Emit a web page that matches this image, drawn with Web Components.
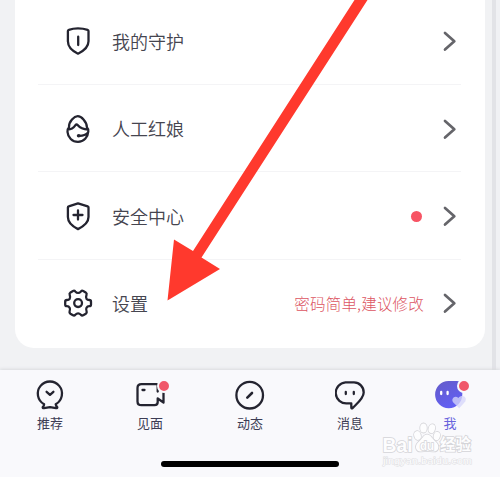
<!DOCTYPE html>
<html lang="zh-CN">
<head>
<meta charset="utf-8">
<title>我的</title>
<style>
html,body{margin:0;width:500px;height:477px;overflow:hidden;background:#f1f2f4;font-family:"Noto Sans CJK SC",sans-serif}
</style>
</head>
<body>
<profile-screen></profile-screen>
<script>
const icons = {
  shield: ['64 27 28 30', '<path d="M78 29.300c4 0 7 .6 9.600 1.500q.9.3.9 1.300v10.200c0 5.200-4 9.300-10.500 12.400c-6.500-3.100-10.100-7.200-10.100-12.400V32.100q0-1 .900-1.300c2.500-.900 5.200-1.500 9.200-1.500zM78.200 37.700v8.300"/>'],
  agent: ['64 114.500 28 30', '<path d="M69 127.800C68.800 124.500 70.200 121.900 72 119.900C73.800 117.900 75.700 116.700 77.700 116.700C79.700 116.700 81.800 118 83.500 120C85.300 122.100 87 124.600 86.900 127.800C88.100 129 88.500 130.700 88.300 132C88 137.500 83.800 142.400 78 142.400C72.200 142.400 67.900 138 67.500 132.500C67.300 130.500 67.800 129 69 127.800M67.700 130C71.300 130 73.500 128.500 75.500 125.600Q76.500 124.400 77.600 125.600C79.800 128.300 83.500 130 88.100 130.200M87.500 133.500C85.800 135.400 83.200 136.200 79.500 136.300"/><ellipse cx="78.700" cy="136.300" rx="1.900" ry="1.700" fill="#242430" stroke="none"/>'],
  safety: ['64 201.500 28 30', '<path d="M78 203.800l9.700 3q.8.200.8 1.200v9.600c0 5-4 8.900-10.500 12c-6.500-3.100-10.100-7-10.100-12V208q0-1 .8-1.200zM78 211v9M73.500 215.500h9"/>'],
  gear: ['63 288.500 30 30', '<path d="M75.300 291.900Q78.100 295 80.900 291.900Q81.900 290.700 83.200 291.400L85.700 292.900Q87.100 293.800 86.500 295.300C85.200 299 86.900 300.500 89.300 300.500Q91 300.500 91 302.200V305Q91 306.700 89.300 306.700C86.700 306.700 85.400 309 86.600 311.900Q87.100 313.300 85.800 314.200L83.200 315.800Q81.900 316.500 80.900 315.200Q78.100 312.400 75.300 315.200Q74.300 316.500 73 315.800L70.400 314.200Q69.100 313.300 69.600 311.900C70.800 309 69.400 306.700 66.900 306.700Q65.200 306.700 65.200 305V302.200Q65.200 300.500 66.900 300.500C69.300 300.500 71 299 69.700 295.300Q69.100 293.800 70.500 292.900L73 291.400Q74.300 290.700 75.300 291.900z"/><circle cx="78.100" cy="303.600" r="3.900"/>'],
  recommend: ['35 378 30 34', '<path d="M44.100 404.200A12.100 12.100 0 1 1 55.700 404.200C56 405.700 56.800 406.700 57.300 407.200Q57.300 408.300 56 408.200L50 407.100L44 408.200Q42.700 408.300 42.700 407.200C43.500 406.500 44.100 405.400 44.100 404.200M46.600 391.800L50 394.900L53.400 391.800"/>'],
  meet: ['135 378 30 34', '<path d="M157 384.200H141.500Q137.500 384.200 137.500 388V401.500Q137.500 405.200 141.500 405.200H154.500Q157.700 405.200 157.700 402V398.500L163.500 402.500V393M157.700 398.500V402.500M157.700 384.800V391.500M142.500 390h2"/>'],
  feed: ['235 378 30 34', '<circle cx="249.700" cy="395.200" r="13.300"/><path d="M247.300 397.600l4.700-4.600" stroke-width="2.600"/>'],
  message: ['335 378 30 34', '<path d="M345.500 382.400H354A9.700 10 0 0 1 363.700 392.500C363.700 398.500 356.500 404 352.700 408Q351.200 409 351.300 407V403.400H347A10.500 10.500 0 0 1 345.500 382.400zM345.800 392v2M353.800 392v2"/>'],
  me: ['432 378 36 34', '<defs><linearGradient id="face" x2=".5" y2="1"><stop stop-color="#655cc8"/><stop offset="1" stop-color="#625ff3"/></linearGradient></defs><path d="M448.500 381H457Q462.300 381 462.300 388V394.500A13.600 13.600 0 1 1 448.500 381z" fill="url(#face)" stroke="none"/><path d="M441.200 392v2M447.600 392v2" stroke="#fff"/><path d="M459.200 408.200L453.300 402.500C450.500 399.400 454.500 394.700 458.400 398C461.300 394 467.700 396.600 465.300 401.400z" fill="#d6d6fa" fill-opacity=".78" stroke="none"/>'],
  chevron: ['440 30 20 24', '<path d="M445 34L454.300 42.300L445 50.600" stroke="#65656a" stroke-width="2.700"/>']
};
function define(name, html, render) {
  customElements.define(name, class extends HTMLElement {
    connectedCallback() {
      if (this.shadowRoot) return;
      const root = this.attachShadow({mode: 'open'});
      root.innerHTML = html;
      if (render) render(this, root);
    }
  });
}
define('line-icon', '<style>:host{display:block;flex:none}svg{display:block}</style>', (el, root) => {
  const [box, body] = icons[el.getAttribute('name')];
  const size = box.split(' ');
  root.innerHTML += `<svg width="${size[2]}" height="${size[3]}" viewBox="${box}" fill="none" stroke="#242430" stroke-width="2.300" stroke-linecap="round" stroke-linejoin="round">${body}</svg>`;
});
define('menu-row', `<style>
:host{display:flex;align-items:center;box-sizing:border-box;height:87.300px;margin:0 24px 0 23px;padding:0 1px 0 25px;border-bottom:1.500px solid #f4f4f6}
:host([last]){border-color:transparent}
.icon{width:30px;display:flex;justify-content:center;padding-top:1px}
.label{font-size:18px;line-height:26px;font-weight:350;color:#45454f;margin-left:19px;flex:1;white-space:nowrap}
.chevron{margin-left:12px;padding-top:1px}
</style><div class="icon"></div><div class="label"></div><slot></slot><line-icon class="chevron" name="chevron"></line-icon>`, (el, root) => {
  root.querySelector('.icon').innerHTML = `<line-icon name="${el.getAttribute('icon')}"></line-icon>`;
  root.querySelector('.label').textContent = el.getAttribute('label');
});
define('menu-card', `<style>:host{display:block;box-sizing:border-box;height:347.500px;margin:0 15px;background:#fff;border-radius:0 0 19px 19px;overflow:hidden}div{margin-top:-2.200px}</style><div><slot></slot></div>`);
define('tab-item', `<style>
:host{display:flex;flex:1;flex-direction:column;align-items:center;color:#3c3c54;position:relative}
:host([active]){color:#6864dc}
.label{font-size:13px;line-height:18px;margin-top:2px}
.badge{display:none;position:absolute;left:59px;top:3px;width:10px;height:10px;border:2px solid #f9f9fc;border-radius:50%;background:#f0586a;margin:-2px}
:host([badge]) .badge{display:block}
</style><div class="icon"></div><span class="badge"></span><span class="label"></span>`, (el, root) => {
  root.querySelector('.icon').innerHTML = `<line-icon name="${el.getAttribute('icon')}"></line-icon>`;
  root.querySelector('.label').textContent = el.getAttribute('label');
});
define('tab-bar', `<style>
:host{display:flex;flex-direction:column;box-sizing:border-box;height:107px;background:#f9f9fc;box-shadow:0 -1px 3px #d9dade;padding-top:8px;position:relative}
nav{display:flex}
.home{width:178px;height:6.500px;border-radius:4px;background:#000;margin:28.500px auto 0}
</style><nav><slot></slot></nav><div class="home"></div>`);
define('page-watermark', `<style>
:host{position:absolute;left:380px;top:419px;display:block}
svg{display:block;overflow:visible}
</style><svg width="100" height="48" viewBox="380 419 100 48" fill="#fdfdfe" stroke="#d4d4d8" stroke-width="1.600" paint-order="stroke" font-family="Liberation Sans,sans-serif">
<text x="382.500" y="451.500" font-size="20" font-weight="700" textLength="30" lengthAdjust="spacingAndGlyphs">Bai</text>
<g><ellipse cx="417.500" cy="435.500" rx="3.300" ry="4.400" transform="rotate(-15 417.500 435.500)"/><ellipse cx="423.500" cy="428" rx="3.300" ry="4.600"/><ellipse cx="431.800" cy="428.700" rx="3.200" ry="4.500" transform="rotate(15 431.800 428.700)"/><ellipse cx="436.800" cy="436" rx="3.100" ry="4.200" transform="rotate(15 436.800 436)"/><path d="M427 434.500C423.500 434.500 422.500 439 418.500 442C414 446 416 452 421 451.500Q427 450.300 433 451.500C439 452 440 446 436 442C432 439 431 434.500 427 434.500z"/></g>
<text x="420" y="449.500" font-size="13" font-weight="700" textLength="14" lengthAdjust="spacingAndGlyphs">du</text>
<text x="440" y="450" font-size="15.500" font-weight="700" font-family="Noto Sans CJK SC,sans-serif" textLength="31" lengthAdjust="spacingAndGlyphs">经验</text>
<text x="383" y="464" font-size="9.500" stroke-width="1" stroke="#dedee2" textLength="89" lengthAdjust="spacingAndGlyphs">jingyan.baidu.com</text>
</svg>`);
define('pointer-arrow', `<style>:host{position:absolute;left:0;top:0;width:500px;height:370px}svg{display:block}</style><svg width="500" height="370" viewBox="0 0 500 370"><path fill="#ff392d" d="M354.500 0L193 251L174 239.500L167.500 300.500L220 269L201.500 257.500L367.500 0z"/></svg>`);
define('profile-screen', `<style>
:host{display:flex;flex-direction:column;position:relative;width:500px;height:477px;background:#f1f2f4;overflow:hidden}
main{height:370px;background:linear-gradient(90deg,transparent 492px,#e2e3e7 492px 496px,#f0f1f4 496px)}
.dot{display:block;width:11px;height:11px;border-radius:50%;background:#f75464;margin-right:6.500px;margin-top:1px}
.hint{font-size:15.500px;letter-spacing:.200px;font-weight:300;line-height:22px;color:#dc5562;margin-right:4px;white-space:nowrap}
</style>
<main><menu-card>
<menu-row icon="shield" label="我的守护"></menu-row>
<menu-row icon="agent" label="人工红娘"></menu-row>
<menu-row icon="safety" label="安全中心"><span class="dot"></span></menu-row>
<menu-row icon="gear" label="设置" last><span class="hint">密码简单,建议修改</span></menu-row>
</menu-card></main>
<tab-bar>
<tab-item icon="recommend" label="推荐"></tab-item>
<tab-item icon="meet" label="见面" badge></tab-item>
<tab-item icon="feed" label="动态"></tab-item>
<tab-item icon="message" label="消息"></tab-item>
<tab-item icon="me" label="我" active badge></tab-item>
</tab-bar>
<page-watermark></page-watermark>
<pointer-arrow></pointer-arrow>`);
</script>
</body>
</html>
